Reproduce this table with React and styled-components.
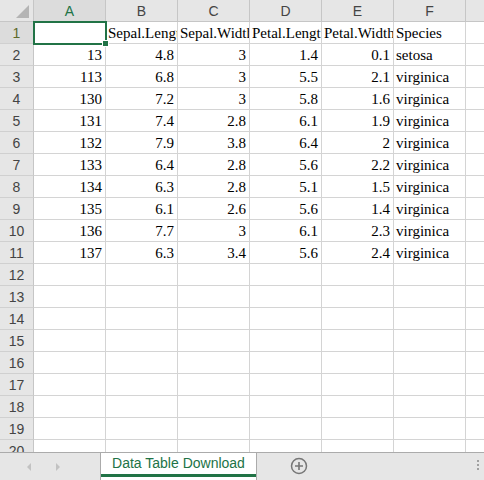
import React from 'react';
import styled, { createGlobalStyle } from 'styled-components';

const GlobalStyle = createGlobalStyle`
  html, body { margin: 0; padding: 0; background: #fff; }
  body { overflow: hidden; }
  * { box-sizing: border-box; }
`;

const GREEN = '#217346';

const Sheet = styled.div`
  width: 484px;
  height: 480px;
  display: flex;
  flex-direction: column;
  overflow: hidden;
  background: #fff;
`;

const Grid = styled.div`
  flex: 1;
  overflow: hidden;
  display: flex;
  flex-direction: column;
`;

const Row = styled.div`
  display: flex;
  flex: none;
  height: 22px;
`;

const Corner = styled.div`
  position: relative;
  width: 34px;
  flex: none;
  background: #e6e6e6;
  border-right: 1px solid #c6c6c6;
  border-bottom: 1px solid #c6c6c6;
`;

const ColHead = styled.div`
  width: 72px;
  flex: none;
  display: flex;
  align-items: center;
  justify-content: center;
  background: ${p => (p.$active ? '#dcdcdc' : '#e6e6e6')};
  border-right: 1px solid #c6c6c6;
  border-bottom: 1px solid ${p => (p.$active ? GREEN : '#c6c6c6')};
  color: ${p => (p.$active ? GREEN : '#444')};
  font-family: "Liberation Sans", Arial, sans-serif;
  font-size: 14px;
`;

const RowHead = styled.div`
  width: 34px;
  flex: none;
  display: flex;
  align-items: center;
  justify-content: center;
  background: ${p => (p.$active ? '#dcdcdc' : '#e6e6e6')};
  border-right: 1px solid ${p => (p.$active ? GREEN : '#c6c6c6')};
  border-bottom: 1px solid #d0d0d0;
  color: ${p => (p.$active ? '#5f6a2a' : '#444')};
  font-family: "Liberation Sans", Arial, sans-serif;
  font-size: 14px;
  padding-top: 1px;
`;

const Cell = styled.div`
  position: relative;
  width: 72px;
  flex: none;
  border-right: 1px solid #d4d4d4;
  border-bottom: 1px solid #d4d4d4;
  display: flex;
  align-items: flex-end;
  justify-content: ${p => (p.$num ? 'flex-end' : 'flex-start')};
  padding: 0 ${p => (p.$num ? 3 : 0)}px 1px ${p => (p.$num ? 0 : 2)}px;
  font-family: "Liberation Serif", "Times New Roman", serif;
  font-size: 15px;
  color: #000;
  white-space: nowrap;
  overflow: hidden;
`;

const SelectedCell = styled(Cell)`
  overflow: visible;
  z-index: 3;
  outline: 2px solid ${GREEN};
  outline-offset: -1px;
`;

const Rest = styled.div`
  flex: 1;
  border-bottom: 1px solid ${p => (p.$header ? '#c6c6c6' : '#d4d4d4')};
  background: ${p => (p.$header ? '#e6e6e6' : '#fff')};
`;

const Handle = styled.div`
  position: absolute;
  right: -4px;
  bottom: -4px;
  width: 7px;
  height: 7px;
  background: ${GREEN};
  border: 1px solid #fff;
`;

const TabBar = styled.div`
  flex: none;
  height: 28px;
  border-top: 1px solid #ababab;
  background: #e6e6e6;
  display: flex;
  align-items: stretch;
`;

const Nav = styled.div`
  width: 100px;
  flex: none;
  display: flex;
  align-items: center;
  padding-left: 26px;
  gap: 23px;
`;

const Tab = styled.div`
  width: 157px;
  flex: none;
  background: #fff;
  border-left: 1px solid #ababab;
  border-right: 1px solid #ababab;
  display: flex;
  flex-direction: column;
`;

const TabLabel = styled.div`
  flex: 1;
  display: flex;
  align-items: center;
  justify-content: center;
  color: ${GREEN};
  font-family: "Liberation Sans", Arial, sans-serif;
  font-size: 14px;
  padding-bottom: 1px;
`;

const TabLine = styled.div`
  height: 3px;
  margin-bottom: 3px;
  background: ${GREEN};
`;

const AddBtn = styled.div`
  width: 84px;
  flex: none;
  display: flex;
  align-items: center;
  justify-content: center;
  padding-bottom: 2px;
`;

const Spacer = styled.div`
  flex: 1;
`;

const Dots = styled.div`
  width: 12px;
  display: flex;
  flex-direction: column;
  justify-content: center;
  align-items: center;
  gap: 2px;
  padding-bottom: 4px;
  span {
    width: 2px;
    height: 2px;
    background: #a0a0a0;
  }
`;

const cols = ['A', 'B', 'C', 'D', 'E', 'F'];

const data = [
  ['', 'Sepal.Length', 'Sepal.Width', 'Petal.Length', 'Petal.Width', 'Species'],
  [13, 4.8, 3, 1.4, 0.1, 'setosa'],
  [113, 6.8, 3, 5.5, 2.1, 'virginica'],
  [130, 7.2, 3, 5.8, 1.6, 'virginica'],
  [131, 7.4, 2.8, 6.1, 1.9, 'virginica'],
  [132, 7.9, 3.8, 6.4, 2, 'virginica'],
  [133, 6.4, 2.8, 5.6, 2.2, 'virginica'],
  [134, 6.3, 2.8, 5.1, 1.5, 'virginica'],
  [135, 6.1, 2.6, 5.6, 1.4, 'virginica'],
  [136, 7.7, 3, 6.1, 2.3, 'virginica'],
  [137, 6.3, 3.4, 5.6, 2.4, 'virginica'],
];

export default function App() {
  const rows = [];
  for (let r = 1; r <= 21; r++) {
    const values = data[r - 1] || [];
    rows.push(
      <Row key={r}>
        <RowHead $active={r === 1}>{r}</RowHead>
        {cols.map((c, ci) => {
          const v = values[ci];
          if (r === 1 && ci === 0) {
            return (
              <SelectedCell key={c}>
                {v}
                <Handle />
              </SelectedCell>
            );
          }
          return (
            <Cell key={c} $num={typeof v === 'number'}>
              {v}
            </Cell>
          );
        })}
        <Rest />
      </Row>
    );
  }

  return (
    <Sheet>
      <GlobalStyle />
      <Grid>
        <Row>
          <Corner>
            <svg width="33" height="21" style={{ position: 'absolute', left: 0, top: 0 }}>
              <polygon points="29,5 29,18 16,18" fill="#b4b4b4" />
            </svg>
          </Corner>
          {cols.map((c, i) => (
            <ColHead key={c} $active={i === 0}>{c}</ColHead>
          ))}
          <Rest $header />
        </Row>
        {rows}
      </Grid>
      <TabBar>
        <Nav>
          <svg width="6" height="10" viewBox="0 0 6 10">
            <polygon points="5,1 1,5 5,9" fill="#c2c2c2" />
          </svg>
          <svg width="6" height="10" viewBox="0 0 6 10">
            <polygon points="1,1 5,5 1,9" fill="#c2c2c2" />
          </svg>
        </Nav>
        <Tab>
          <TabLabel>Data Table Download</TabLabel>
          <TabLine />
        </Tab>
        <AddBtn>
          <svg width="18" height="18" viewBox="0 0 18 18">
            <circle cx="9" cy="9" r="7.5" fill="none" stroke="#767676" strokeWidth="1.5" />
            <path d="M9 5v8M5 9h8" stroke="#767676" strokeWidth="1.6" />
          </svg>
        </AddBtn>
        <Spacer />
        <Dots>
          <span />
          <span />
          <span />
        </Dots>
      </TabBar>
    </Sheet>
  );
}
